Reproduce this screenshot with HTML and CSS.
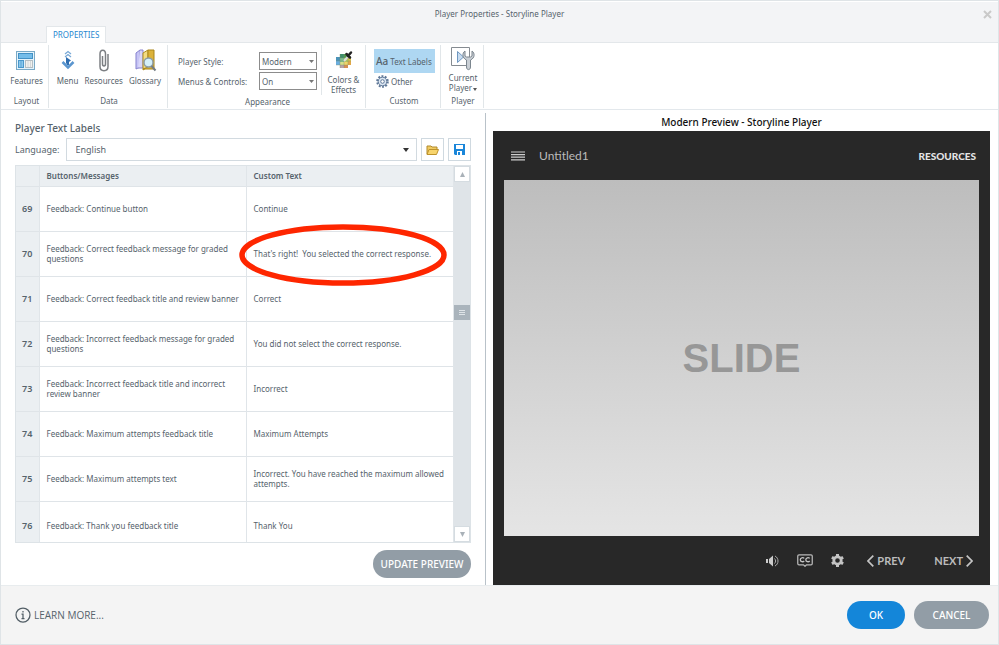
FILE: index.html
```html
<!DOCTYPE html>
<html lang="en">
<head>
<meta charset="utf-8">
<title>Player Properties - Storyline Player</title>
<link rel="stylesheet" href="styles.css">
</head>
<body>
<div class="window">
  <header class="titlebar">
    <h1 class="window-title">Player Properties - Storyline Player</h1>
    <button class="close" type="button" aria-label="Close"><svg width="9" height="9" viewBox="0 0 9 9"><path d="M1 1l7 7M8 1l-7 7" stroke="#c9c9c9" stroke-width="2"/></svg></button>
    <nav class="tabs"><a class="tab" href="#properties">PROPERTIES</a></nav>
  </header>

  <section class="ribbon" id="properties">
    <div class="group group-layout">
      <div class="tools">
        <button class="tool" type="button">
          <svg width="20" height="24" viewBox="0 0 20 24"><rect x=".5" y="2.500" width="18" height="18" fill="#e3f3fc" stroke="#79a9c6"/><rect x="2.500" y="4.500" width="14" height="5" fill="#74bdea" stroke="#4391c5"/><rect x="2.500" y="11.500" width="5" height="7" fill="#8cc9ee" stroke="#4a98cb"/><rect x="9.500" y="11.500" width="7" height="7" fill="#f1f1ee" stroke="#b5bec3"/><path d="M5 12v6" stroke="#5aa5d6"/><path d="M12 12v6M14.500 12v6" stroke="#d3d8da"/></svg>
          <span>Features</span>
        </button>
      </div>
      <h2 class="group-name">Layout</h2>
    </div>
    <div class="group group-data">
      <div class="tools">
        <button class="tool" type="button">
          <svg width="14" height="24" viewBox="0 0 14 24"><path d="M4 5l3-2.500L10 5M4 8l3-2.500L10 8" fill="none" stroke="#79a9d6" stroke-width="1.300"/><path d="M5 8l5 3.500L5 15z" fill="#2e6db0"/><path d="M7 11v5" stroke="#2e6db0" stroke-width="2"/><path d="M1.500 13L7 18.500 12.500 13" fill="none" stroke="#5b96cf" stroke-width="2.500"/></svg>
          <span>Menu</span>
        </button>
        <button class="tool" type="button">
          <svg width="12" height="24" viewBox="0 0 12 24"><path d="M4.500 7v8c0 2.500 3 2.500 3 0V5c0-5-5.500-5-5.500 0v12.500c0 5.500 8 5.500 8 0V5" fill="none" stroke="#7c7f83" stroke-width="1.500"/></svg>
          <span>Resources</span>
        </button>
        <button class="tool" type="button">
          <svg width="24" height="24" viewBox="0 0 24 24"><path d="M3 4l4-3v17l-4 2z" fill="#c6c4f4" stroke="#8581cf"/><path d="M7 1h3v18H5" fill="#d8d6fa" stroke="#8a85cc"/><path d="M10 4l5-3v17l-5 3z" fill="#f3dc83" stroke="#b08e20"/><path d="M15 1h6v19H10l5-2z" fill="#dcb23a" stroke="#a9851a"/><circle cx="15.500" cy="13.500" r="4.500" fill="#d4effa" stroke="#8b9ca6" stroke-width="1.500"/><path d="M18.500 17l4 4.500" stroke="#747d84" stroke-width="2"/></svg>
          <span>Glossary</span>
        </button>
      </div>
      <h2 class="group-name">Data</h2>
    </div>
    <div class="group group-appearance">
      <div class="tools tools-flush">
        <div class="fields">
          <label for="style">Player Style:</label>
          <span class="picker"><select id="style"><option>Modern</option></select><svg class="arrow" width="5" height="3" viewBox="0 0 5 3"><path d="M0 0h5L2.500 3z" fill="#777"/></svg></span>
          <label for="menus">Menus &amp; Controls:</label>
          <span class="picker"><select id="menus"><option>On</option></select><svg class="arrow" width="5" height="3" viewBox="0 0 5 3"><path d="M0 0h5L2.500 3z" fill="#777"/></svg></span>
        </div>
        <button class="tool tool-colors" type="button">
          <svg width="20" height="24" viewBox="0 0 20 24"><path d="M6 5h8v3h3v8h-3v3H6v-3H2V8h4z" fill="#9dbb62"/><path d="M6 5h4v4H6z" fill="#3f8d6c"/><path d="M10 5h4v4h-4z" fill="#4d9a4a"/><path d="M2 8h4v4H2z" fill="#4b93b8"/><path d="M6 9h4v4H6z" fill="#7dbf8e"/><path d="M10 9h4v4h-4z" fill="#bcd05a"/><path d="M14 8h3v4h-3z" fill="#d9c64e"/><path d="M2 12h4v4H2z" fill="#6aaee0"/><path d="M6 13h4v3H6z" fill="#d6e08a"/><path d="M10 13h4v3h-4z" fill="#f0d468"/><path d="M14 12h3v4h-3z" fill="#e2a748"/><path d="M6 16h4v3H6z" fill="#b9a1a8"/><path d="M10 16h4v3h-4z" fill="#d98d52"/><path d="M6 5v14M10 5v14M14 8v8M2 12h15M2 16h12M6 9h11" stroke="#7f8f6a" stroke-width=".4"/><path d="M10 12l4.500-5" stroke="#ddd" stroke-width="2"/><path d="M12.500 5L16 8.500M14 7l3-3.500" stroke="#222" stroke-width="2.500" stroke-linecap="round"/></svg>
          <span>Colors &amp;<br>Effects</span>
        </button>
      </div>
      <h2 class="group-name">Appearance</h2>
    </div>
    <div class="group group-custom">
      <div class="choices">
        <button class="choice selected" type="button"><b class="aa">Aa</b>Text Labels</button>
        <button class="choice" type="button"><svg width="13" height="13" viewBox="0 0 13 13"><circle cx="6.500" cy="6.500" r="5.300" fill="none" stroke="#5f7898" stroke-width="2" stroke-dasharray="1.900 1.430"/><circle cx="6.500" cy="6.500" r="4.300" fill="#dbe6f2" stroke="#5f7898"/><circle cx="6.500" cy="6.500" r="1.800" fill="#fff" stroke="#5f7898"/></svg>Other</button>
      </div>
      <h2 class="group-name">Custom</h2>
    </div>
    <div class="group group-player">
      <div class="tools">
        <button class="tool tool-player" type="button">
          <svg width="24" height="24" viewBox="0 0 24 24"><path d="M.5.500h18v18H.5z" fill="#fff" stroke="#858b91"/><path d="M6.500 4.500l6 5.500-6 5.500z" fill="#c8dcf0" stroke="#6f97c0"/><path d="M14 4c-3 2-3 7 1.500 9v7c0 3.500 4 3.500 4 0v-7C24 11 24 6 21 4v5l-1.500 1h-4L14 9z" fill="#c9cfd5" stroke="#7c868f"/></svg>
          <span>Current<br>Player<svg class="mini" width="4" height="3" viewBox="0 0 4 3"><path d="M0 0h4L2 3z" fill="#555"/></svg></span>
        </button>
      </div>
      <h2 class="group-name">Player</h2>
    </div>
  </section>

  <main class="body">
    <section class="editor">
      <h2 class="heading">Player Text Labels</h2>
      <div class="language">
        <label for="lang">Language:</label>
        <span class="picker wide"><select id="lang"><option>English</option></select><svg class="arrow" width="6" height="4" viewBox="0 0 6 4"><path d="M0 0h6L3 4z" fill="#333"/></svg></span>
        <button class="square" type="button" aria-label="Open"><svg width="13" height="12" viewBox="0 0 13 12"><path d="M1 10V2h4l1 1h5v3" fill="#f0cb62" stroke="#b18a2c"/><path d="M1 10.500L3 5.500h9.500l-2 5z" fill="#f7d46c" stroke="#bd922b"/></svg></button>
        <button class="square" type="button" aria-label="Save"><svg width="11" height="11" viewBox="0 0 11 11"><path d="M0 0h11v11H1L0 10z" fill="#1a86d9"/><path d="M2 1h7v4H2zM3 7h5v4H3z" fill="#fff"/><path d="M4 8h2v3H4z" fill="#1a86d9"/></svg></button>
      </div>
      <div class="grid">
        <table>
          <colgroup><col class="c-num"><col class="c-message"><col></colgroup>
          <thead><tr><th></th><th>Buttons/Messages</th><th>Custom Text</th></tr></thead>
          <tbody>
            <tr><th>69</th><td>Feedback: Continue button</td><td>Continue</td></tr>
            <tr><th>70</th><td>Feedback: Correct feedback message for graded<br>questions</td><td class="marked">That's right!&nbsp; You selected the correct response.<svg class="ring" viewBox="0 0 208 62" aria-hidden="true"><ellipse cx="104" cy="31" rx="101" ry="28" fill="none" stroke="#fe2600" stroke-width="5.500"/></svg></td></tr>
            <tr><th>71</th><td>Feedback: Correct feedback title and review banner</td><td>Correct</td></tr>
            <tr><th>72</th><td>Feedback: Incorrect feedback message for graded<br>questions</td><td>You did not select the correct response.</td></tr>
            <tr><th>73</th><td>Feedback: Incorrect feedback title and incorrect<br>review banner</td><td>Incorrect</td></tr>
            <tr><th>74</th><td>Feedback: Maximum attempts feedback title</td><td>Maximum Attempts</td></tr>
            <tr><th>75</th><td>Feedback: Maximum attempts text</td><td>Incorrect. You have reached the maximum allowed<br>attempts.</td></tr>
            <tr><th>76</th><td>Feedback: Thank you feedback title</td><td>Thank You</td></tr>
          </tbody>
        </table>
        <div class="scrollbar">
          <button type="button" aria-label="Scroll up"><svg width="5" height="5" viewBox="0 0 5 5"><path d="M0 5h5L2.500 0z" fill="#a9b1b8"/></svg></button>
          <div class="track"><div class="thumb"><i></i><i></i><i></i></div></div>
          <button type="button" aria-label="Scroll down"><svg width="5" height="5" viewBox="0 0 5 5"><path d="M0 0h5L2.500 5z" fill="#a9b1b8"/></svg></button>
        </div>
      </div>
      <button class="pill update" type="button">UPDATE PREVIEW</button>
    </section>

    <section class="preview">
      <h2 class="preview-title">Modern Preview - Storyline Player</h2>
      <div class="player">
        <div class="player-top">
          <button class="menu" type="button" aria-label="Menu"><svg width="14" height="10" viewBox="0 0 14 10"><path d="M0 1h14M0 3.600h14M0 6.200h14M0 8.800h14" stroke="#cdcdcd" stroke-width="1.200"/></svg></button>
          <span class="project">Untitled1</span>
          <a class="resources" href="#resources">RESOURCES</a>
        </div>
        <div class="slide">SLIDE</div>
        <div class="controls">
          <button type="button" aria-label="Volume"><svg width="13" height="12" viewBox="0 0 13 12"><path d="M0 4h2v4H0zM3 4l4-3.500v11L3 8z" fill="#ccc"/><path d="M8.500 3.500c1.500 1.500 1.500 3.500 0 5M9 1c4 2 4 8 0 10" fill="none" stroke="#aaa"/></svg></button>
          <button type="button" aria-label="Captions"><svg width="16" height="13" viewBox="0 0 16 13"><path d="M2 .75h12q1.250 0 1.250 1.250v7.500q0 1.250-1.250 1.250H9.500L8 12.300l-1.500-1.550H2Q.75 10.750.75 9.500V2Q.75.75 2 .75z" fill="none" stroke="#b8b8b8" stroke-width="1.250"/><path d="M7.200 4.400C6 3.100 3.300 3.600 3.300 5.700S6 8.300 7.200 7M12.700 4.400C11.500 3.100 8.800 3.600 8.800 5.700S11.500 8.300 12.700 7" fill="none" stroke="#c4c4c4" stroke-width="1.300"/></svg></button>
          <button type="button" aria-label="Settings"><svg width="13" height="13" viewBox="0 0 13 13"><circle cx="6.500" cy="6.500" r="3.700" fill="none" stroke="#c4c4c4" stroke-width="2.800"/><path d="M6.500 0v2.500M6.500 10.500V13M.9 3.250l2.100 1.250M10 8.500l2.100 1.250M.9 9.750L3 8.500M10 4.500l2.100-1.250" stroke="#c4c4c4" stroke-width="3"/></svg></button>
          <button class="step" type="button"><svg width="7" height="12" viewBox="0 0 7 12"><path d="M6.300.7L1 6l5.300 5.300" fill="none" stroke="#c4c4c4" stroke-width="1.700"/></svg>PREV</button>
          <button class="step next" type="button">NEXT<svg width="7" height="12" viewBox="0 0 7 12"><path d="M.7.700L6 6 .7 11.300" fill="none" stroke="#c4c4c4" stroke-width="1.700"/></svg></button>
        </div>
      </div>
    </section>
  </main>

  <footer class="footer">
    <a class="learn" href="#learn"><svg width="16" height="16" viewBox="0 0 16 16"><circle cx="8" cy="8" r="7" fill="none" stroke="#525e66" stroke-width="1.250"/><path d="M8 4v1.500M6.500 7H8v4.500M6.500 11.500h3" fill="none" stroke="#525e66" stroke-width="1.250"/></svg>LEARN MORE...</a>
    <button class="pill ok" type="button">OK</button>
    <button class="pill cancel" type="button">CANCEL</button>
  </footer>
</div>
</body>
</html>
```
FILE: styles.css
```css
* { box-sizing: border-box; }

body {
  margin: 0;
  font-family: "Noto Sans", "Open Sans", sans-serif;
  font-size: 8px;
  color: #56636c;
  background: #fff;
}

button, select { font: inherit; color: inherit; }
button { padding: 0; border: 0; background: none; }
a { color: inherit; text-decoration: none; }
h1, h2 { margin: 0; font-size: inherit; font-weight: 400; }
svg { display: block; flex: none; }

.window {
  min-height: 100vh;
  display: flex;
  flex-direction: column;
  border: 1px solid #dfe4e7;
}

/* Title bar */
.titlebar {
  position: relative;
  height: 42px;
  display: flex;
  flex-direction: column;
  background: #f3f4f6;
  border-bottom: 1px solid #e3e7ea;
  border-top: 1px solid #fff;
}
.window-title { padding-top: 6px; line-height: 12px; text-align: center; }
.close { position: absolute; top: 8px; right: 6px; }
.tabs { margin-top: auto; padding-left: 45px; display: flex; }
.tab {
  height: 17px;
  margin-bottom: -1px;
  padding: 0 6px;
  line-height: 16px;
  color: #2688cf;
  background: #fff;
  border: 1px solid #e3e7ea;
  border-bottom: 0;
}

/* Ribbon */
.ribbon {
  height: 67px;
  display: flex;
  padding: 2px 0 1px 2px;
  border-bottom: 1px solid #e3e8ec;
}
.group {
  display: flex;
  flex-direction: column;
  padding-left: 2px;
  border-right: 1px solid #e1e6e9;
}
.group-name { margin-top: auto; line-height: 14px; text-align: center; }
.group-layout { width: 46px; }
.group-data { width: 119px; }
.group-appearance { width: 198px; }
.group-custom { width: 75px; }
.group-player { width: 43px; }
.tools { display: flex; justify-content: center; gap: 6px; }
.tools-flush { gap: 0; }
.tool {
  display: flex;
  flex-direction: column;
  align-items: center;
  gap: 2px;
  padding-top: 4px;
  line-height: 11px;
}
.fields {
  flex: 1;
  display: grid;
  grid-template-columns: 1fr 58px;
  gap: 2px 0;
  align-items: center;
  align-content: start;
  padding: 7px 4px 0 8px;
}
.picker { position: relative; display: block; }
.picker select {
  display: block;
  width: 100%;
  height: 18px;
  padding: 0 2px;
  appearance: none;
  background: #fff;
  border: 1px solid #8c8c8c;
  border-radius: 0;
}
.arrow { position: absolute; right: 3px; top: 8px; }
.tool-colors { width: 44px; border-left: 1px solid #e1e6e9; line-height: 10px; }
.tool-player { padding-top: 2px; line-height: 10px; }
.mini { display: inline-block; margin-left: 1px; }
.choices { padding: 4px 5px 0 6px; }
.choice { display: flex; align-items: center; gap: 2px; width: 100%; height: 16px; padding-left: 2px; }
.selected { height: 24px; background: #aed7f2; }
.aa { font-size: 10px; font-weight: 500; }

/* Text label editor */
.body { flex: 1; display: flex; padding-top: 3px; }
.editor {
  width: 485px;
  display: flex;
  flex-direction: column;
  padding: 8px 14px 7px;
  border-right: 1px solid #b9c2c9;
}
.heading { font-size: 10px; line-height: 14px; font-weight: 500; }
.language { display: flex; align-items: center; gap: 4px; padding: 3px 0 4px; font-size: 9px; }
.language .wide { flex: 1; margin-left: 2px; }
.wide select { height: 23px; padding: 0 9px; border-color: #d2dae0; }
.wide .arrow { right: 8px; top: 10px; }
.square {
  width: 23px;
  height: 23px;
  display: grid;
  place-items: center;
  border: 1px solid #cfd9e0;
}
.grid { display: flex; border: 1px solid #dde3e7; }
table { flex: 1; table-layout: fixed; border-collapse: collapse; }
.c-num { width: 23px; }
.c-message { width: 207px; }
th, td { padding: 1px 0 0 7px; text-align: left; line-height: 10px; border-right: 1px solid #e0e5e9; white-space: nowrap; }
th { font-weight: 600; background: #ebeff2; }
thead th { height: 20px; }
tbody th { padding: 1px 0 0; text-align: center; font-size: 9px; }
tbody tr { height: 45px; border-top: 1px solid #dfe4e8; }
tbody tr:last-child { height: 41px; }
tbody tr:last-child > * { padding-top: 8px; }
.marked { position: relative; }
.ring { position: absolute; left: -8px; top: -8px; width: 208px; height: 62px; }
.scrollbar { width: 16px; display: flex; flex-direction: column; background: #dfe4e8; }
.scrollbar button { height: 16px; display: grid; place-items: center; background: #fff; border: 1px solid #d5dce1; }
.track { flex: 1; padding-top: 123px; }
.thumb { height: 15px; display: flex; flex-direction: column; align-items: center; justify-content: center; gap: 1px; background: #aab4bc; }
.thumb i { width: 6px; height: 1px; background: #dfe4e8; }
.pill { border-radius: 14px; height: 28px; color: #fff; background: #929da6; font-size: 10px; font-weight: 500; }
.update { align-self: flex-end; width: 98px; margin-top: 7px; }

/* Player preview */
.preview { flex: 1; display: flex; flex-direction: column; padding: 0 8px 0 7px; }
.preview-title { font-size: 10px; line-height: 18px; font-weight: 500; text-align: center; color: #111; }
.player { flex: 1; display: flex; flex-direction: column; padding: 0 11px; background: #282828; color: #bbb; font-family: Lato, sans-serif; }
.player-top { height: 49px; display: flex; align-items: center; padding: 0 3px 0 7px; }
.project { margin-left: 14px; font-size: 12px; }
.resources { margin-left: auto; font-size: 10px; font-weight: 900; color: #e4e4e4; }
.slide {
  flex: 1;
  display: grid;
  place-items: center;
  font: bold 40px "Liberation Sans", sans-serif;
  color: #979797;
  background: linear-gradient(#bdbdbd, #e5e5e5);
}
.controls { height: 49px; display: flex; align-items: center; justify-content: flex-end; gap: 18px; padding-right: 6px; }
.step { display: flex; align-items: center; gap: 3px; margin-left: 5px; font-size: 11px; font-weight: 700; }
.next { margin-left: 11px; }

/* Footer */
.footer {
  height: 59px;
  display: flex;
  align-items: center;
  gap: 9px;
  padding: 0 9px 0 14px;
  background: #f4f4f4;
  border-top: 1px solid #e8ecee;
}
.learn { display: flex; align-items: center; gap: 3px; margin-right: auto; font: 10px "Open Sans", sans-serif; }
.ok { width: 58px; background: #1486d9; }
.cancel { width: 75px; }
```
